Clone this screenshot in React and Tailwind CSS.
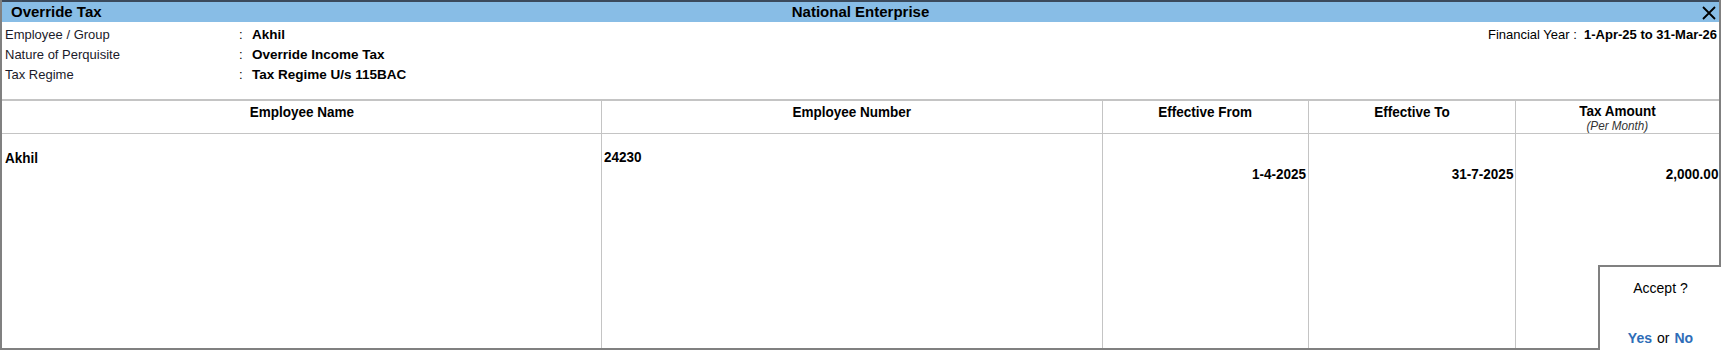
import React from "react";

function N({ children, align = "left", className = "" }) {
  const origin = align === "right" ? "origin-right" : align === "center" ? "origin-center" : "origin-left";
  return <span className={`inline-block whitespace-nowrap scale-x-[0.9] ${origin} ${className}`}>{children}</span>;
}

export default function App() {
  return (
    <div className="relative w-[1721px] h-[350px] bg-white overflow-hidden text-black" style={{ fontFamily: '"Liberation Sans", Arial, sans-serif' }}>
      <div className="flex flex-col h-full border-l-2 border-r-2 border-b-2 border-[#808080]">
        {/* Title bar */}
        <div className="flex items-center h-[22px] bg-[#88bde6] border-t-2 border-[#3b4a5c] pl-[9px] relative">
          <span className="text-[15px] font-bold w-[300px]">Override Tax</span>
          <span className="flex-1 text-center text-[15px] font-bold">National Enterprise</span>
          <span className="w-[309px] flex justify-end pr-[3px]">
            <svg width="14" height="14" viewBox="0 0 14 14" className="mt-[2px]">
              <path d="M1 1 L13 13 M13 1 L1 13" stroke="#000" strokeWidth="1.8" />
            </svg>
          </span>
        </div>
        {/* Info area */}
        <div className="flex h-[79px] pt-[3px] border-b-2 border-[#c4c4c4]">
          <div className="flex flex-col text-[13px] leading-[20px] pl-[3px]">
            <div className="flex"><span className="w-[234px] text-[#1a1a2a]">Employee / Group</span><span className="w-[13px]">:</span><span className="font-bold text-[13.5px]">Akhil</span></div>
            <div className="flex"><span className="w-[234px] text-[#1a1a2a]">Nature of Perquisite</span><span className="w-[13px]">:</span><span className="font-bold text-[13.5px]">Override Income Tax</span></div>
            <div className="flex"><span className="w-[234px] text-[#1a1a2a]">Tax Regime</span><span className="w-[13px]">:</span><span className="font-bold text-[13.5px]">Tax Regime U/s 115BAC</span></div>
          </div>
          <div className="flex-1 flex justify-end text-[13px] leading-[20px] pr-[2px]">
            <span>Financial Year :&nbsp;&nbsp;</span><span className="font-bold">1-Apr-25 to 31-Mar-26</span>
          </div>
        </div>
        {/* Table */}
        <div className="flex flex-1 text-[15px] leading-[17px]">
          <div className="w-[600px] flex flex-col border-r border-[#c4c4c4]">
            <div className="h-[33px] border-b border-[#c4c4c4] text-center font-bold pt-[2px]"><N align="center">Employee Name</N></div>
            <div className="pt-[15px] pl-[3px] font-bold"><N>Akhil</N></div>
          </div>
          <div className="w-[501px] flex flex-col border-r border-[#c4c4c4]">
            <div className="h-[33px] border-b border-[#c4c4c4] text-center font-bold pt-[2px]"><N align="center">Employee Number</N></div>
            <div className="pt-[14px] pl-[2px] font-bold"><N>24230</N></div>
          </div>
          <div className="w-[206px] flex flex-col border-r border-[#c4c4c4]">
            <div className="h-[33px] border-b border-[#c4c4c4] text-center font-bold pt-[2px]"><N align="center">Effective From</N></div>
            <div className="pt-[31px] pr-[2px] text-right font-bold"><N align="right">1-4-2025</N></div>
          </div>
          <div className="w-[207px] flex flex-col border-r border-[#c4c4c4]">
            <div className="h-[33px] border-b border-[#c4c4c4] text-center font-bold pt-[2px]"><N align="center">Effective To</N></div>
            <div className="pt-[31px] pr-[2px] text-right font-bold"><N align="right">31-7-2025</N></div>
          </div>
          <div className="flex-1 flex flex-col">
            <div className="h-[33px] border-b border-[#c4c4c4] text-center pt-[2px] leading-[15px]">
              <div className="font-bold"><N align="center">Tax Amount</N></div>
              <div className="italic text-[13px] text-[#333]"><N align="center">(Per Month)</N></div>
            </div>
            <div className="pt-[31px] pr-[1px] text-right font-bold"><N align="right">2,000.00</N></div>
          </div>
        </div>
      </div>
      {/* Accept box */}
      <div className="absolute left-[1598px] top-[265px] w-[123px] h-[85px] bg-white border-l-2 border-t-2 border-[#808080] flex flex-col items-center text-[14px]">
        <div className="mt-[11px]">Accept ?</div>
        <div className="mt-auto mb-[1px]">
          <span className="font-bold text-[#2e6db8]">Yes</span>
          <span className="mx-[5px]">or</span>
          <span className="font-bold text-[#2e6db8]">No</span>
        </div>
      </div>
    </div>
  );
}
